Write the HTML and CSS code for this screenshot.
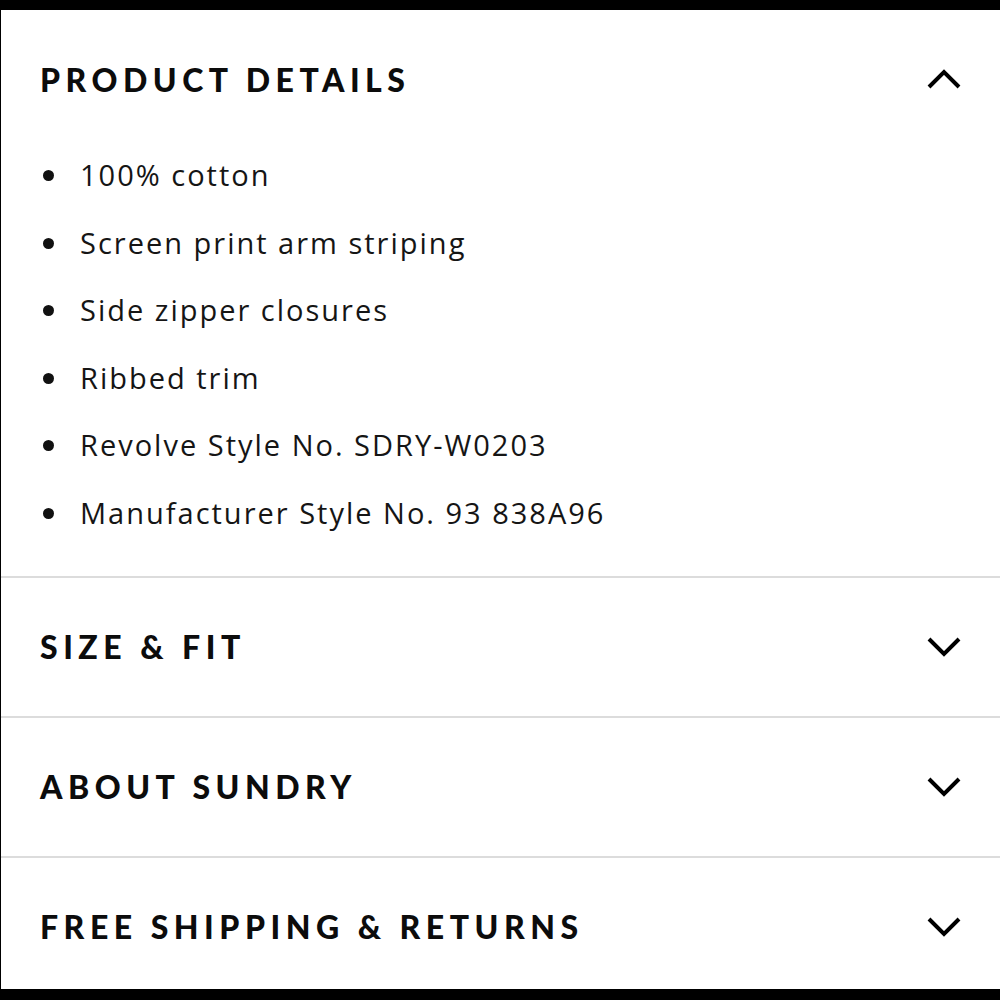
FILE: index.html
```html
<!DOCTYPE html>
<html lang="en">
<head>
<meta charset="utf-8">
<title>Product details</title>
<link rel="stylesheet" href="styles.css">
</head>
<body>
<div class="frame">
  <section class="panel panel-open">
    <div class="panel-head">
      <h2 class="panel-title">PRODUCT DETAILS</h2>
      <svg class="chev" width="36" height="22" viewBox="0 0 36 22"><polyline points="3,19 18,4 33,19" fill="none" stroke="#000" stroke-width="4"/></svg>
    </div>
    <ul class="details">
      <li>100% cotton</li>
      <li>Screen print arm striping</li>
      <li>Side zipper closures</li>
      <li>Ribbed trim</li>
      <li>Revolve Style No. SDRY-W0203</li>
      <li>Manufacturer Style No. 93 838A96</li>
    </ul>
  </section>
  <section class="panel">
    <div class="panel-head">
      <h2 class="panel-title">SIZE &amp; FIT</h2>
      <svg class="chev" width="36" height="22" viewBox="0 0 36 22"><polyline points="3,3 18,18 33,3" fill="none" stroke="#000" stroke-width="4"/></svg>
    </div>
  </section>
  <section class="panel">
    <div class="panel-head">
      <h2 class="panel-title">ABOUT SUNDRY</h2>
      <svg class="chev" width="36" height="22" viewBox="0 0 36 22"><polyline points="3,3 18,18 33,3" fill="none" stroke="#000" stroke-width="4"/></svg>
    </div>
  </section>
  <section class="panel">
    <div class="panel-head">
      <h2 class="panel-title">FREE SHIPPING &amp; RETURNS</h2>
      <svg class="chev" width="36" height="22" viewBox="0 0 36 22"><polyline points="3,3 18,18 33,3" fill="none" stroke="#000" stroke-width="4"/></svg>
    </div>
  </section>
</div>
</body>
</html>
```

FILE: styles.css
```css
html, body {
  margin: 0;
  padding: 0;
  background: #000;
}
body {
  width: 1000px;
  height: 1000px;
  overflow: hidden;
  padding-top: 10px;
  box-sizing: border-box;
}
.frame {
  margin-left: 1px;
  height: 979px;
  background: #fff;
  color: #111;
  font-family: "Open Sans", "Liberation Sans", sans-serif;
  overflow: hidden;
}
.panel {
  border-bottom: 2px solid #dcdcdc;
}
.panel:last-child {
  border-bottom: none;
}
.panel-head {
  height: 138px;
  display: flex;
  align-items: center;
  justify-content: space-between;
  padding: 0 38px 0 39px;
}
.panel-open .panel-head {
  height: 124px;
  padding-top: 7px;
}
.panel-title {
  margin: 0;
  font-family: "Lato", "Liberation Sans", sans-serif;
  font-weight: 900;
  font-size: 32px;
  letter-spacing: 5.5px;
  color: #0c0c0c;
}
.chev {
  display: block;
}
.details {
  list-style: none;
  margin: 0;
  padding: 0 0 29px 40px;
  display: flex;
  flex-direction: column;
}
.details li {
  position: relative;
  padding-left: 39px;
  height: 67.6px;
  line-height: 67.6px;
  font-size: 29px;
  letter-spacing: 2px;
  color: #151515;
}
.details li::before {
  content: "";
  position: absolute;
  left: 2px;
  top: 29px;
  width: 11px;
  height: 11px;
  border-radius: 50%;
  background: #111;
}
```
